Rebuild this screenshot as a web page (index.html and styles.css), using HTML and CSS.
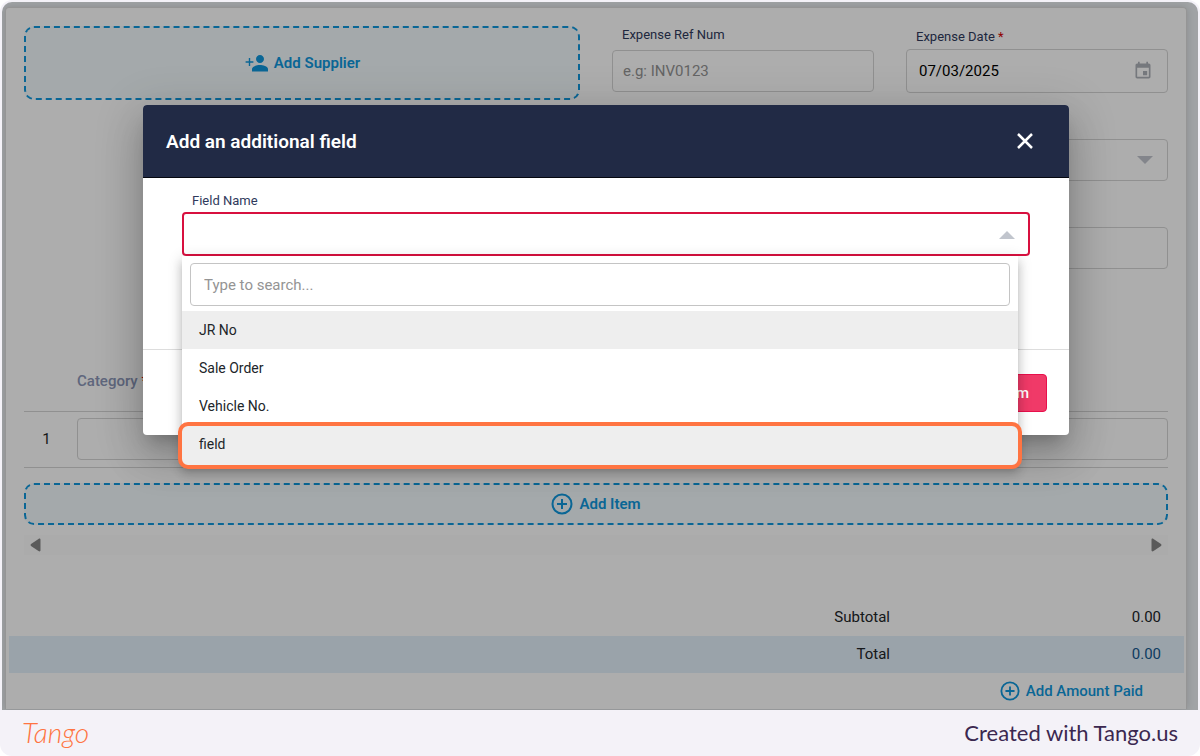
FILE: index.html
```html
<!DOCTYPE html>
<html lang="en">
<head>
    <meta charset="UTF-8">
    <meta name="viewport" content="width=device-width, initial-scale=1.0">
    <link rel="stylesheet" href="styles.css">
    <title>Add an additional field</title>
</head>
<body>

<div class="page">
    <main class="screen">
        <form class="card">
            <div class="card-body">
                <div class="top-grid">
                    <button type="button" class="dashed supplier">
                        <svg width="26" height="24" viewBox="0 0 24 24" fill="currentColor"><path d="M15 12c2.200 0 4-1.800 4-4s-1.800-4-4-4-4 1.800-4 4 1.800 4 4 4zM5.200 10.200V7H3.800v3.200H.6v1.600h3.200V15h1.400v-3.200h3.200v-1.600zM15 14c-2.700 0-8 1.300-8 4v2.500h16V18c0-2.700-5.300-4-8-4z"/></svg>
                        Add Supplier
                    </button>
                    <div class="column">
                        <label for="refNum">Expense Ref Num</label>
                        <input type="text" id="refNum" class="box" placeholder="e.g: INV0123">
                    </div>
                    <div class="column column-date">
                        <label for="expenseDate">Expense Date <span class="required">*</span></label>
                        <div class="with-icon">
                            <input type="text" id="expenseDate" class="box tall" value="07/03/2025">
                            <svg class="calendar" width="20" height="20" viewBox="0 0 24 24" fill="currentColor"><path d="M17 12h-5v5h5v-5zM16 1v2H8V1H6v2H5c-1.100 0-2 .9-2 2v14c0 1.100.9 2 2 2h14c1.100 0 2-.9 2-2V5c0-1.100-.9-2-2-2h-1V1h-2zm3 18H5V8h14v11z"/></svg>
                        </div>
                        <div class="with-icon stacked">
                            <select class="box" aria-label="Type"><option></option></select>
                            <svg class="arrow" width="16" height="8" viewBox="0 0 16 8" fill="currentColor"><path d="M0 0h16L8 8z"/></svg>
                        </div>
                        <input type="text" class="box stacked" aria-label="Details">
                    </div>
                </div>

                <table class="items">
                    <thead>
                        <tr><th class="num"></th><th>Category <span class="required">*</span></th><th></th></tr>
                    </thead>
                    <tbody>
                        <tr>
                            <td class="num">1</td>
                            <td><input type="text" class="box" aria-label="Category"></td>
                            <td><input type="text" class="box" aria-label="Amount"></td>
                        </tr>
                    </tbody>
                </table>

                <button type="button" class="dashed add-item">
                    <svg width="22" height="22" viewBox="0 0 22 22" fill="none" stroke="currentColor" stroke-width="2"><circle cx="11" cy="11" r="9.500"/><path d="M11 6v10M6 11h10"/></svg>
                    Add Item
                </button>

                <div class="scrollbar">
                    <svg width="11" height="14" viewBox="0 0 11 14" fill="currentColor"><path d="M10.500 2v10c0 1.500-1 1.800-2 1L1 8Q0 7 1 6l7.500-5c1-.8 2-.5 2 1z"/></svg>
                    <svg width="11" height="14" viewBox="0 0 11 14" fill="currentColor"><path d="M.5 2v10c0 1.500 1 1.800 2 1L10 8q1-1 0-2L2.500 1C1.500.2.5.5.5 2z"/></svg>
                </div>
            </div>

            <div class="totals">
                <div class="total-row"><span>Subtotal</span><span class="value">0.00</span></div>
                <div class="total-row grand"><span>Total</span><span class="value">0.00</span></div>
            </div>
            <button type="button" class="add-paid">
                <svg width="20" height="20" viewBox="0 0 22 22" fill="none" stroke="currentColor" stroke-width="2"><circle cx="11" cy="11" r="9.500"/><path d="M11 6v10M6 11h10"/></svg>
                Add Amount Paid
            </button>
        </form>

        <div class="backdrop">
            <div class="modal" role="dialog" aria-labelledby="modalTitle">
                <div class="modal-header">
                    <h2 id="modalTitle">Add an additional field</h2>
                    <button type="button" class="close" aria-label="Close">
                        <svg width="16" height="16" viewBox="0 0 16 16" fill="none" stroke="currentColor" stroke-width="2.500"><path d="M1 1l14 14M15 1L1 15"/></svg>
                    </button>
                </div>
                <div class="modal-body">
                    <label for="fieldName">Field Name</label>
                    <div class="field-select">
                        <select id="fieldName" class="box"><option></option></select>
                        <svg class="arrow" width="16" height="8" viewBox="0 0 16 8" fill="currentColor"><path d="M0 8h16L8 0z"/></svg>
                        <div class="menu">
                            <input type="text" class="box search" placeholder="Type to search..." aria-label="Search">
                            <ul role="listbox" aria-label="Field Name">
                                <li role="option" class="hovered">JR No</li>
                                <li role="option">Sale Order</li>
                                <li role="option">Vehicle No.</li>
                                <li role="option" class="marked">field</li>
                            </ul>
                        </div>
                    </div>
                </div>
                <div class="modal-footer">
                    <button type="button" class="confirm">Confirm</button>
                </div>
            </div>
        </div>
    </main>

    <footer class="footer">
        <span class="logo">Tango</span>
        <span>Created with Tango.us</span>
    </footer>
</div>

</body>
</html>
```
FILE: styles.css
```css
* {
    box-sizing: border-box;
}

body {
    margin: 0;
    font-family: Roboto, "Liberation Sans", sans-serif;
    font-size: 15px;
    color: #212529;
    background-color: #fff;
}

button,
input,
select {
    font-family: inherit;
    font-size: inherit;
    color: inherit;
}

button {
    cursor: pointer;
}

.page {
    display: flex;
    flex-direction: column;
    min-height: 100vh;
    background-color: #f4f2f8;
    border-radius: 12px;
}

.screen {
    position: relative;
    flex: 1;
    margin: 2px 2px 0;
    padding: 5px 11px 0 3px;
    background-color: #edf1f4;
    border-radius: 10px 10px 0 0;
    overflow: hidden;
}

.card {
    height: 100%;
    background-color: #fff;
    border: 1px solid #dcdcdc;
    border-bottom: none;
    border-radius: 4px 4px 0 0;
    box-shadow: 0 0 8px rgba(0, 0, 0, 0.15);
}

.card-body {
    padding: 18px 18px 0;
}

.top-grid {
    display: grid;
    grid-template-columns: 556fr 262fr 262fr;
    gap: 32px;
    align-items: start;
}

label {
    display: block;
    padding-left: 10px;
    font-size: 13px;
    line-height: 18px;
    color: #2f3a5c;
}

.required {
    color: #d50000;
}

.box {
    display: block;
    width: 100%;
    height: 42px;
    padding: 0 10px;
    border: 1px solid #d4d4d4;
    border-radius: 4px;
    background-color: transparent;
    appearance: none;
    outline: none;
}

.box::placeholder {
    color: #949494;
}

.column label {
    margin-bottom: 6px;
}

.column-date {
    padding-top: 2px;
}

.column-date label {
    margin-bottom: 3px;
}

.tall {
    height: 44px;
    padding: 0 12px;
    color: #000;
}

.with-icon {
    position: relative;
}

.stacked {
    margin-top: 46px;
}

.calendar {
    position: absolute;
    right: 15px;
    top: 12px;
    color: #adb1b8;
}

.arrow {
    position: absolute;
    right: 15px;
    top: 17px;
    color: #c1c5cd;
}

.dashed {
    display: flex;
    justify-content: center;
    align-items: center;
    gap: 4px;
    width: 100%;
    font-weight: 600;
    color: #0f97dc;
    background-color: #f2f9fd;
    border: 2px dashed #0f97dc;
    border-radius: 10px;
}

.supplier {
    height: 74px;
}

.items {
    width: 100%;
    margin-top: 82px;
    border-collapse: collapse;
    table-layout: fixed;
}

.items th {
    height: 60px;
    padding: 0;
    text-align: left;
    font-weight: 500;
    color: #8c97b8;
    border-bottom: 1px solid #d4d4d4;
}

.items td {
    height: 56px;
    padding: 0;
    border-bottom: 1px solid #d4d4d4;
}

.items .num {
    width: 53px;
    padding-right: 8px;
    text-align: center;
}

.add-item {
    height: 42px;
    margin-top: 15px;
    gap: 6px;
}

.scrollbar {
    display: flex;
    justify-content: space-between;
    align-items: center;
    height: 20px;
    margin-top: 10px;
    padding: 0 6px;
    color: #858585;
    background-color: #fcfcfc;
}

.totals {
    margin: 44px 2px 0 3px;
}

.total-row {
    display: flex;
    justify-content: flex-end;
    align-items: center;
    height: 37px;
    padding-right: 23px;
}

.value {
    width: 271px;
    text-align: right;
}

.grand {
    background-color: #e4f0fb;
}

.grand .value {
    color: #14598f;
}

.add-paid {
    display: flex;
    align-items: center;
    gap: 6px;
    height: 36px;
    margin-left: auto;
    padding: 0 43px 0 0;
    font-weight: 500;
    color: #0f97dc;
    background: none;
    border: none;
}

.backdrop {
    position: absolute;
    inset: 0;
    padding: 103px 129px 0 141px;
    background-color: rgba(0, 0, 0, 0.32);
}

.modal {
    background-color: #fff;
    border-radius: 4px;
    box-shadow: 0 11px 15px -7px rgba(0, 0, 0, 0.2), 0 24px 38px 3px rgba(0, 0, 0, 0.14), 0 9px 46px 8px rgba(0, 0, 0, 0.12);
}

.modal-header {
    display: flex;
    justify-content: space-between;
    align-items: center;
    height: 73px;
    padding: 0 36px 0 23px;
    color: #fff;
    background-color: #212a45;
    border-bottom: 1px solid #05070f;
    border-radius: 4px 4px 0 0;
}

.modal-header h2 {
    margin: 0;
    font-size: 19px;
    font-weight: 600;
}

.close {
    display: flex;
    padding: 0;
    background: none;
    border: none;
}

.modal-body {
    height: 171px;
    padding: 14px 39px 0;
}

.field-select {
    position: relative;
    margin-top: 2px;
}

.field-select > .box {
    height: 44px;
    border: 2px solid #d8103f;
}

.field-select .arrow {
    top: 19px;
}

.menu {
    position: absolute;
    top: 44px;
    left: 0;
    right: 12px;
    padding-top: 7px;
    background-color: #fff;
    border-radius: 0 0 4px 4px;
    box-shadow: 0 5px 5px -3px rgba(0, 0, 0, 0.2), 0 8px 10px 1px rgba(0, 0, 0, 0.14), 0 3px 14px 2px rgba(0, 0, 0, 0.12);
}

.search {
    width: auto;
    min-width: calc(100% - 16px);
    height: 43px;
    margin: 0 8px 5px;
    padding: 0 13px;
    border-color: #c4c4c4;
}

.menu ul {
    margin: 0;
    padding: 0;
    list-style: none;
}

.menu li {
    position: relative;
    height: 38px;
    padding-left: 17px;
    font-size: 14px;
    line-height: 38px;
}

.menu .hovered,
.menu .marked {
    background-color: #eee;
}

.menu .marked {
    height: 40px;
}

.menu .marked::after {
    content: "";
    position: absolute;
    inset: -3px -4px -4px;
    border: 4px solid #ff7442;
    border-radius: 10px;
}

.modal-footer {
    display: flex;
    justify-content: flex-end;
    height: 86px;
    padding: 24px 22px;
    border-top: 1px solid #ddd;
}

.confirm {
    height: 38px;
    padding: 0 17px;
    font-weight: 500;
    color: #fff;
    background-color: #f03a68;
    border: 1px solid #e8104c;
    border-radius: 4px;
}

.footer {
    display: flex;
    justify-content: space-between;
    align-items: center;
    height: 46px;
    padding: 0 22px 2px;
    font-family: Lato, sans-serif;
    font-size: 22px;
    color: #3b2850;
}

.logo {
    font-size: 28px;
    font-style: italic;
    font-weight: 300;
    color: #ff7442;
}
```
